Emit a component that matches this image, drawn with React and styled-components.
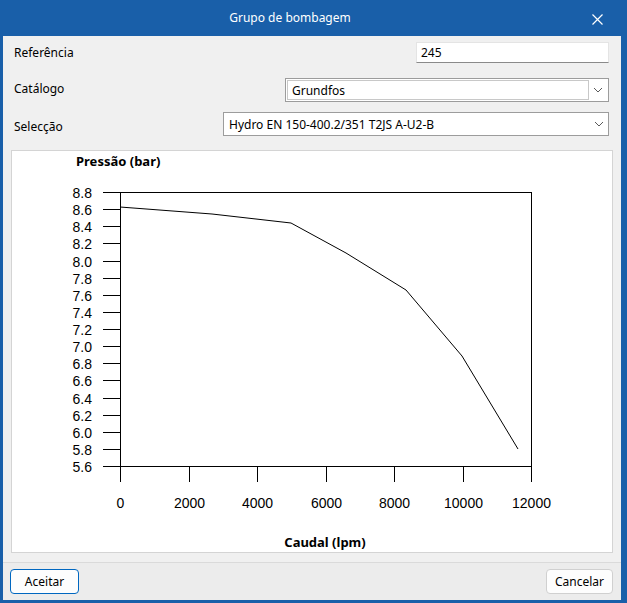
import React from "react";
import styled, { createGlobalStyle } from "styled-components";

const Global = createGlobalStyle`
  html, body { margin: 0; padding: 0; background: #ffffff; }
  body { font-family: "Noto Sans", "Open Sans", sans-serif; }
  * { box-sizing: border-box; }
`;

const Window = styled.div`
  width: 627px;
  height: 603px;
  background: #195fa9;
  padding: 0 6px 3px 3px;
  display: flex;
  flex-direction: column;
`;

const TitleBar = styled.div`
  height: 36px;
  flex: none;
  display: flex;
  align-items: center;
  justify-content: center;
  position: relative;
  color: #ffffff;
  font-size: 12px;
  margin-right: -6px;
  margin-left: -3px;
  padding-left: 3px;
`;

const TitleText = styled.span`
  margin-right: 50px;
  margin-top: -2px;
`;

const CloseBtn = styled.span`
  position: absolute;
  right: 24px;
  top: 14px;
  width: 11px;
  height: 11px;
  display: flex;
`;

const Body = styled.div`
  flex: 1;
  background: #f0f0f0;
  display: flex;
  flex-direction: column;
`;

const Form = styled.div`
  padding: 6px 8px 0 8px;
  display: flex;
  flex-direction: column;
`;

const Row = styled.div`
  display: flex;
  align-items: center;
  justify-content: space-between;
  height: ${(p) => p.h}px;
  margin-bottom: ${(p) => p.mb}px;
  padding: 0 4px 0 3px;
`;

const Label = styled.span`
  font-size: 12px;
  color: #000;
  margin-top: ${(p) => p.dy || 0}px;
`;

const TextInput = styled.div`
  width: 193px;
  height: 21px;
  background: #ffffff;
  border: 1px solid #e4e4e4;
  border-bottom: 1px solid #8a8a8a;
  font-size: 12px;
  padding-left: 4px;
  display: flex;
  align-items: center;
`;

const Combo = styled.div`
  width: ${(p) => p.w}px;
  height: 24px;
  background: #ffffff;
  border: 1px solid #9c9c9c;
  display: flex;
  align-items: center;
  padding: ${(p) => (p.editable ? "1px" : "0 0 0 5px")};
  font-size: 12px;
  color: #000;
`;

const ComboField = styled.div`
  flex: 1;
  height: 100%;
  border: 1px solid #c8c8c8;
  display: flex;
  align-items: center;
  padding-left: 4px;
`;

const ComboText = styled.span`
  flex: 1;
`;

const Arrow = styled.span`
  width: 18px;
  display: flex;
  justify-content: center;
  align-items: center;
`;

const ChartPanel = styled.div`
  margin: 14px 8px 0 8px;
  height: 403px;
  background: #ffffff;
  border: 1px solid #d4d4d4;
  display: flex;
`;

const Separator = styled.div`
  margin-top: 9px;
  height: 1px;
  background: #dadada;
`;

const Footer = styled.div`
  flex: 1;
  background: #ececec;
  display: flex;
  justify-content: space-between;
  align-items: flex-start;
  padding: 6px 8px 0 7px;
`;

const Button = styled.button`
  height: 25px;
  width: ${(p) => p.w}px;
  border-radius: 4px;
  border: 1px solid ${(p) => (p.primary ? "#0067c0" : "#d0d0d0")};
  background: #fdfdfd;
  font-family: "Noto Sans", "Open Sans", sans-serif;
  font-size: 12px;
  color: #000;
  padding: 0;
`;

const ChevronDown = () => (
  <svg width="10" height="6" viewBox="0 0 10 6">
    <path d="M1 1 L5 5 L9 1" fill="none" stroke="#5a5a5a" strokeWidth="1" />
  </svg>
);

const yVals = [];
for (let i = 0; i <= 16; i++) yVals.push((8.8 - i * 0.2).toFixed(1));
const xVals = [0, 2000, 4000, 6000, 8000, 10000, 12000];

const L = 108, T = 41, R = 519, B = 315;
const yStep = (B - T) / 16;
const xStep = (R - L) / 6;

const curve = [
  [108, 56],
  [200, 63],
  [279, 72],
  [334, 102],
  [394, 139],
  [450, 205],
  [506, 298],
];

const numFont = '"Liberation Sans", Arial, sans-serif';

const Chart = () => (
  <svg width="600" height="401" viewBox="0 0 600 401" fontFamily='"Noto Sans", "Open Sans", sans-serif'>
    <text x="64" y="15" fontSize="13" fontWeight="bold" fill="#000">Pressão (bar)</text>
    <rect x={L + 0.5} y={T + 0.5} width={R - L} height={B - T} fill="none" stroke="#000" strokeWidth="1" shapeRendering="crispEdges" />
    {yVals.map((v, i) => {
      const y = Math.round(T + i * yStep) + 0.5;
      return (
        <g key={v}>
          <line x1="91" x2={L} y1={y} y2={y} stroke="#000" strokeWidth="1" shapeRendering="crispEdges" />
          <text x="80" y={y + 5} fontSize="14" fontFamily={numFont} textAnchor="end" fill="#000">{v}</text>
        </g>
      );
    })}
    {xVals.map((v, i) => {
      const x = Math.round(L + i * xStep) + 0.5;
      return (
        <g key={v}>
          <line x1={x} x2={x} y1={B} y2="331" stroke="#000" strokeWidth="1" shapeRendering="crispEdges" />
          <text x={x} y="357" fontSize="14" fontFamily={numFont} textAnchor="middle" fill="#000">{v}</text>
        </g>
      );
    })}
    <polyline points={curve.map((p) => p.join(",")).join(" ")} fill="none" stroke="#000" strokeWidth="1" />
    <text x="313" y="396" fontSize="13" fontWeight="bold" textAnchor="middle" fill="#000">Caudal (lpm)</text>
  </svg>
);

export default function App() {
  return (
    <>
      <Global />
      <Window>
        <TitleBar>
          <TitleText>Grupo de bombagem</TitleText>
          <CloseBtn>
            <svg width="11" height="11" viewBox="0 0 11 11">
              <path d="M0.5 0.5 L10.5 10.5 M10.5 0.5 L0.5 10.5" stroke="#ffffff" strokeWidth="1.2" />
            </svg>
          </CloseBtn>
        </TitleBar>
        <Body>
          <Form>
            <Row h={21} mb={15}>
              <Label>Referência</Label>
              <TextInput>245</TextInput>
            </Row>
            <Row h={24} mb={10}>
              <Label dy={-4}>Catálogo</Label>
              <Combo w={324} editable>
                <ComboField>Grundfos</ComboField>
                <Arrow><ChevronDown /></Arrow>
              </Combo>
            </Row>
            <Row h={24} mb={0}>
              <Label dy={4}>Selecção</Label>
              <Combo w={386}>
                <ComboText>Hydro EN 150-400.2/351 T2JS A-U2-B</ComboText>
                <Arrow><ChevronDown /></Arrow>
              </Combo>
            </Row>
          </Form>
          <ChartPanel>
            <Chart />
          </ChartPanel>
          <Separator />
          <Footer>
            <Button primary w={69}>Aceitar</Button>
            <Button w={67}>Cancelar</Button>
          </Footer>
        </Body>
      </Window>
    </>
  );
}
